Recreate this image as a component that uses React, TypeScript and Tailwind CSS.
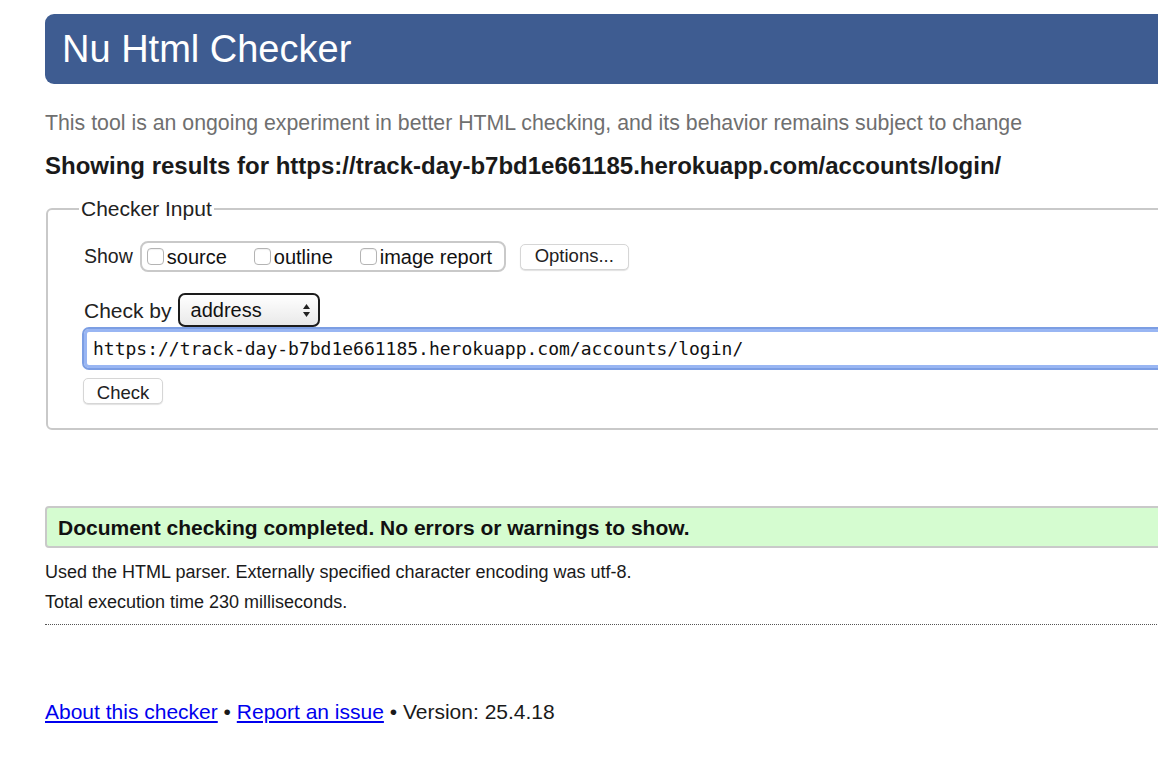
import React from 'react';

const Box = () => (
  <span className="inline-block w-[17px] h-[17px] rounded-[4px] border border-[#b4b4b4] bg-white mr-[3px] shadow-[inset_0_1px_1px_rgba(0,0,0,0.06)]" />
);

export default function App() {
  return (
    <div className="w-[1158px] h-[784px] overflow-hidden bg-white text-[#111]" style={{ fontFamily: '"Liberation Sans", Arial, sans-serif' }}>
      <div className="ml-[45px] w-[1200px] pt-[14px]">
        <h1 className="h-[70px] bg-[#3e5c91] rounded-l-[9px] text-white text-[38px] pl-[17px] flex items-center leading-none">
          Nu Html Checker
        </h1>

        <p className="mt-[27px] text-[21.3px] leading-[24px] text-[#6f6f6f]">
          This tool is an ongoing experiment in better HTML checking, and its behavior remains subject to change
        </p>

        <h2 className="mt-[17px] text-[24px] leading-[28px] font-bold text-[#1a1a1a]">
          Showing results for https://track-day-b7bd1e661185.herokuapp.com/accounts/login/
        </h2>

        <fieldset className="mt-[17px] ml-px border-2 border-[#c9c9c9] rounded-[6px] pl-[36px] pb-[22px]">
          <legend className="-ml-[5px] px-[2px] text-[21px] leading-[24px] text-[#222]">Checker Input</legend>

          <div className="mt-[20px] flex items-center text-[19.5px] leading-none">
            <span className="text-[#222]">Show</span>
            <div className="ml-[7px] h-[31px] w-[366px] border-2 border-[#c9c9c9] rounded-[8px] flex items-center pl-[5px] text-[20px]">
              <label className="flex items-center"><Box />source</label>
              <label className="flex items-center ml-[27px]"><Box />outline</label>
              <label className="flex items-center ml-[27px]"><Box />image report</label>
            </div>
            <button className="ml-[14px] h-[26px] w-[109px] rounded-[5px] border border-[#d6d6d6] bg-white shadow-[0_1px_1px_rgba(0,0,0,0.12)] text-[18.5px] text-[#222]">
              Options...
            </button>
          </div>

          <div className="mt-[21px] flex items-center text-[21px] leading-none">
            <span className="text-[#222]">Check by</span>
            <div className="ml-[6px] h-[34px] w-[142px] border-2 border-[#1c1c1c] rounded-[7px] bg-gradient-to-b from-white to-[#e9e9e9] flex items-center pl-[11px] pr-[7px] justify-between text-[20px]">
              <span>address</span>
              <svg width="9" height="15" viewBox="0 0 9 15">
                <path d="M4.5 1 L8 6 H1 Z" fill="#222" />
                <path d="M4.5 14 L8 9 H1 Z" fill="#222" />
              </svg>
            </div>
          </div>

          <div className="-ml-[2px] h-[43px] rounded-[7px] border-2 border-[#7c9ee3] shadow-[0_0_0_3px_#99b6f3_inset] bg-white flex items-center pl-[9px]">
            <span className="text-[18px] text-[#111]" style={{ fontFamily: '"DejaVu Sans Mono", monospace' }}>
              https://track-day-b7bd1e661185.herokuapp.com/accounts/login/
            </span>
          </div>

          <button className="mt-[8px] -ml-px h-[26px] w-[80px] rounded-[5px] border border-[#d6d6d6] bg-white shadow-[0_1px_1px_rgba(0,0,0,0.12)] text-[18.5px] text-[#222]">
            Check
          </button>
        </fieldset>

        <div className="mt-[76px] h-[42px] border-2 border-[#c9c9c9] rounded-[4px] bg-[#d5fcd0] flex items-center pl-[11px] pt-[2px]">
          <span className="text-[21px] font-bold text-[#111]">Document checking completed. No errors or warnings to show.</span>
        </div>

        <p className="mt-[12px] text-[18px] leading-[24px] text-[#1a1a1a]">
          Used the HTML parser. Externally specified character encoding was utf-8.
        </p>
        <p className="mt-[6px] text-[18px] leading-[24px] text-[#1a1a1a]">
          Total execution time 230 milliseconds.
        </p>
        <div className="mt-[10px] border-b border-dotted border-[#555]" />

        <p className="mt-[74px] text-[21px] leading-[26px] text-[#1a1a1a]">
          <a href="#" className="text-[#0000ee] underline">About this checker</a>
          {' • '}
          <a href="#" className="text-[#0000ee] underline">Report an issue</a>
          {' • Version: 25.4.18'}
        </p>
      </div>
    </div>
  );
}
